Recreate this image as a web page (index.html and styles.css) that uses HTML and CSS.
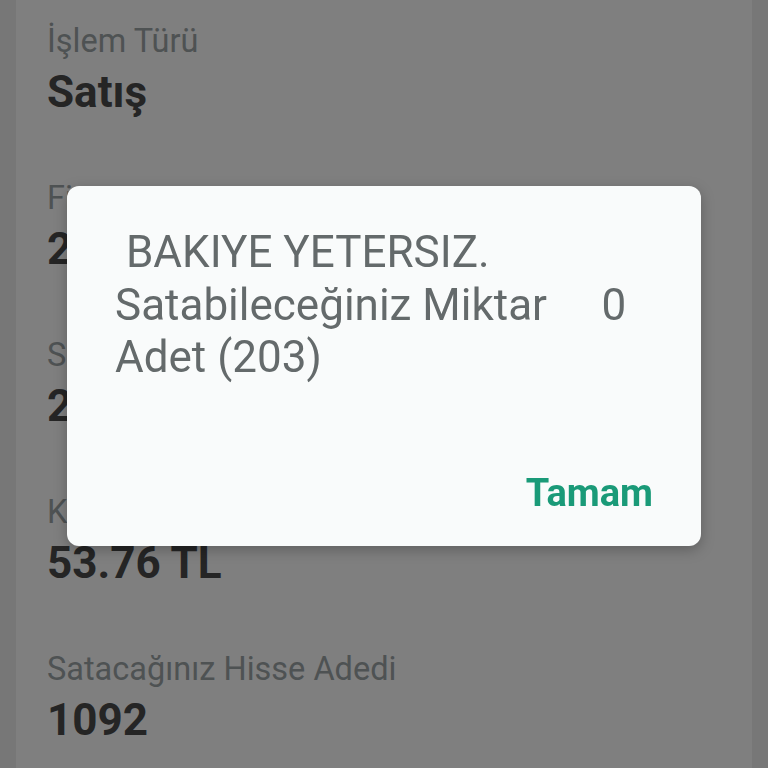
FILE: index.html
```html
<!DOCTYPE html>
<html lang="tr">
<head>
<meta charset="utf-8">
<title>Satış</title>
<link rel="stylesheet" href="styles.css">
</head>
<body>
<div class="card">
  <div class="field"><div class="label">İşlem Türü</div><div class="value">Satış</div></div>
  <div class="field"><div class="label">Fiyat</div><div class="value">2.05 TL</div></div>
  <div class="field"><div class="label">Son Fiyat</div><div class="value">2.06 TL</div></div>
  <div class="field"><div class="label">Komisyon</div><div class="value">53.76 TL</div></div>
  <div class="field"><div class="label">Satacağınız Hisse Adedi</div><div class="value">1092</div></div>
</div>
<div class="dialog">
  <div class="message"> BAKIYE YETERSIZ.
Satabileceğiniz Miktar     0 Adet (203)</div>
  <div class="actions"><span class="btn">Tamam</span></div>
</div>
</body>
</html>
```
FILE: styles.css
```css
html, body {
  margin: 0;
  padding: 0;
  height: 100%;
  overflow: hidden;
}
body {
  background: #777777;
  font-family: Roboto, "Noto Sans", sans-serif;
}
.card {
  margin: 0 16px;
  height: 100%;
  background: #7f7f7f;
  padding: 21px 0 0 31px;
  box-sizing: border-box;
}
.field {
  display: flex;
  flex-direction: column;
  gap: 5px;
  margin-bottom: 60px;
}
.label {
  font-size: 32.5px;
  line-height: 40px;
  color: #4e5253;
}
.value {
  font-size: 44px;
  line-height: 52px;
  font-weight: 700;
  color: #252525;
}
.dialog {
  position: fixed;
  left: 67px;
  top: 186px;
  width: 634px;
  height: 360px;
  box-sizing: border-box;
  background: #f9fbfb;
  border-radius: 12px;
  box-shadow: 0 4px 14px rgba(0,0,0,0.25);
  padding: 40px 48px 27px 48px;
  display: flex;
  flex-direction: column;
}
.message {
  white-space: pre-wrap;
  font-size: 44px;
  line-height: 52.5px;
  color: #646a6b;
  flex: 1;
}
.actions {
  display: flex;
  justify-content: flex-end;
}
.btn {
  font-size: 38px;
  font-weight: 700;
  color: #1a9a78;
  line-height: 52px;
}
```
